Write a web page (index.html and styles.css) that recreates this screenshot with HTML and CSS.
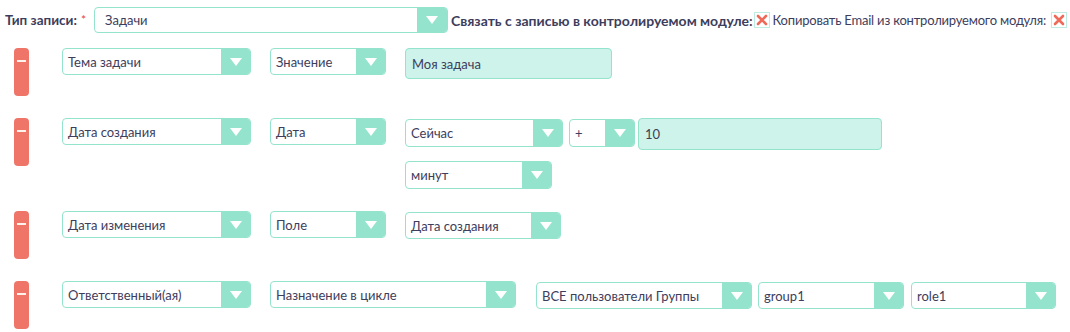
FILE: index.html
```html
<!DOCTYPE html>
<html lang="ru">
  <head>
    <meta charset="UTF-8" />
    <meta name="viewport" content="width=device-width, initial-scale=1.0" />
    <title>Условия записи</title>
    <link rel="stylesheet" href="styles.css">
  </head>
  <body>
    <div class="top">
      <span class="label">Тип записи:</span>
      <span class="req">*</span>
      <div class="sel sel-type"><span class="txt">Задачи</span><span class="arrow"></span></div>
      <span class="label label-link">Связать с записью в контролируемом модуле:</span>
      <span class="check">
        <svg width="12" height="12" viewBox="0 0 12 12"><path d="M2 2 L10 10 M10 2 L2 10" stroke="#f06a5a" stroke-width="2.6" stroke-linecap="round"/></svg>
      </span>
      <span class="plain">Копировать Email из контролируемого модуля:</span>
      <span class="check check-last">
        <svg width="12" height="12" viewBox="0 0 12 12"><path d="M2 2 L10 10 M10 2 L2 10" stroke="#f06a5a" stroke-width="2.6" stroke-linecap="round"/></svg>
      </span>
    </div>

    <div class="rows">
      <div class="row">
        <button class="remove"></button>
        <div class="sel w-field"><span class="txt">Тема задачи</span><span class="arrow"></span></div>
        <div class="sel w-type"><span class="txt">Значение</span><span class="arrow"></span></div>
        <div class="values">
          <div class="line">
            <div class="inp w-value">Моя задача</div>
          </div>
        </div>
      </div>

      <div class="row">
        <button class="remove"></button>
        <div class="sel w-field"><span class="txt">Дата создания</span><span class="arrow"></span></div>
        <div class="sel w-type"><span class="txt">Дата</span><span class="arrow"></span></div>
        <div class="values">
          <div class="line">
            <div class="sel sel-tall w-now"><span class="txt">Сейчас</span><span class="arrow"></span></div>
            <div class="sel sel-tall w-sign"><span class="txt">+</span><span class="arrow"></span></div>
            <div class="inp w-num">10</div>
          </div>
          <div class="line line-second">
            <div class="sel sel-tall w-unit"><span class="txt">минут</span><span class="arrow"></span></div>
          </div>
        </div>
      </div>

      <div class="row">
        <button class="remove"></button>
        <div class="sel w-field"><span class="txt">Дата изменения</span><span class="arrow"></span></div>
        <div class="sel w-type"><span class="txt">Поле</span><span class="arrow"></span></div>
        <div class="values">
          <div class="line">
            <div class="sel w-ref"><span class="txt">Дата создания</span><span class="arrow"></span></div>
          </div>
        </div>
      </div>

      <div class="row">
        <button class="remove"></button>
        <div class="sel w-field"><span class="txt">Ответственный(ая)</span><span class="arrow"></span></div>
        <div class="sel w-assign"><span class="txt">Назначение в цикле</span><span class="arrow"></span></div>
        <div class="values values-wide">
          <div class="line">
            <div class="sel w-users"><span class="txt">ВСЕ пользователи Группы</span><span class="arrow"></span></div>
            <div class="sel w-group"><span class="txt">group1</span><span class="arrow"></span></div>
            <div class="sel w-role"><span class="txt">role1</span><span class="arrow"></span></div>
          </div>
        </div>
      </div>
    </div>
  </body>
</html>
```

FILE: styles.css
```css
* {
  margin: 0;
  padding: 0;
  box-sizing: border-box;
  font-family: Lato, "Open Sans", sans-serif;
}

body {
  background-color: #ffffff;
  color: #3d3d5c;
  font-size: 13px;
}

.top {
  display: flex;
  align-items: center;
  padding: 7px 0 0 5px;
  height: 33px;
}

.label {
  font-weight: bold;
  font-size: 13.5px;
  color: #3d3d5c;
}

.req {
  color: #e8413a;
  margin-left: 4px;
  margin-right: 8px;
  font-size: 12px;
  align-self: flex-start;
  margin-top: 5px;
}

.label-link {
  margin-left: 3px;
  font-size: 14px;
}

.plain {
  margin-left: 3px;
  letter-spacing: -0.2px;
}

.check {
  display: flex;
  align-items: center;
  justify-content: center;
  width: 16px;
  height: 16px;
  border: 1px solid #bfece0;
  margin-left: 1px;
}

.check-last {
  margin-left: 5px;
}

.sel {
  display: flex;
  height: 27px;
  border: 1px solid #94e3cc;
  border-radius: 4px;
  overflow: hidden;
  background-color: #ffffff;
}

.sel .txt {
  flex-grow: 1;
  display: flex;
  align-items: center;
  padding-left: 5px;
  white-space: nowrap;
  overflow: hidden;
}

.sel .arrow {
  width: 29px;
  flex-shrink: 0;
  background-color: #94e3cc;
  display: flex;
  align-items: center;
  justify-content: center;
}

.sel .arrow::after {
  content: "";
  border-left: 6px solid transparent;
  border-right: 6px solid transparent;
  border-top: 8px solid #ffffff;
}

.sel-type {
  width: 354px;
  height: 26px;
}

.sel-type .txt {
  padding-left: 10px;
}

.sel-type .arrow {
  width: 30px;
}

.sel-tall {
  height: 28px;
}

.inp {
  display: flex;
  align-items: center;
  height: 31px;
  padding-left: 6px;
  background-color: #cdf3ea;
  border: 1px solid #94e3cc;
  border-radius: 4px;
}

.rows {
  display: flex;
  flex-direction: column;
  gap: 22px;
  padding-top: 15px;
}

.row {
  display: flex;
  align-items: flex-start;
}

.remove {
  width: 15px;
  height: 48px;
  margin-left: 14px;
  margin-right: 33px;
  background-color: #f07569;
  border: none;
  border-radius: 4px;
  position: relative;
  cursor: pointer;
}

.remove::after {
  content: "";
  position: absolute;
  left: 3px;
  top: 12px;
  width: 9px;
  height: 2px;
  background-color: #fdf3ea;
}

.w-field {
  width: 189px;
  margin-right: 19px;
}

.w-type {
  width: 116px;
  margin-right: 19px;
}

.w-assign {
  width: 246px;
  margin-right: 20px;
}

.values {
  display: flex;
  flex-direction: column;
}

.line {
  display: flex;
  align-items: flex-start;
}

.line-second {
  margin-top: 11px;
}

.w-value {
  width: 207px;
}

.w-now {
  width: 158px;
  margin-top: 1px;
  margin-right: 6px;
}

.w-sign {
  width: 66px;
  margin-top: 1px;
  margin-right: 3px;
}

.w-num {
  width: 244px;
  height: 32px;
}

.w-unit {
  width: 147px;
}

.w-ref {
  width: 156px;
  margin-top: 1px;
}

.values-wide .sel {
  margin-top: 1px;
}

.w-users {
  width: 216px;
  margin-right: 6px;
}

.w-group {
  width: 146px;
  margin-right: 7px;
}

.w-role {
  width: 145px;
}
```
